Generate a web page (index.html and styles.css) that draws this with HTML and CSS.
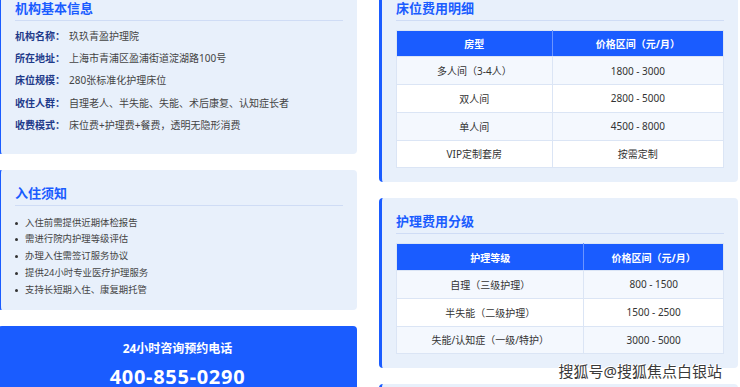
FILE: index.html
```html
<!DOCTYPE html>
<html lang="zh-CN">
<head>
<meta charset="utf-8">
<title>玖玖青盈护理院</title>
<link rel="stylesheet" href="styles.css">
</head>
<body>
<div class="page">
  <div class="col">
    <section class="card card-info">
      <h3 class="card-title">机构基本信息</h3>
      <div class="info">
        <div class="info-row"><span class="info-label">机构名称：</span><span class="info-value">玖玖青盈护理院</span></div>
        <div class="info-row"><span class="info-label">所在地址：</span><span class="info-value">上海市青浦区盈浦街道淀湖路100号</span></div>
        <div class="info-row"><span class="info-label">床位规模：</span><span class="info-value">280张标准化护理床位</span></div>
        <div class="info-row"><span class="info-label">收住人群：</span><span class="info-value">自理老人、半失能、失能、术后康复、认知症长者</span></div>
        <div class="info-row"><span class="info-label">收费模式：</span><span class="info-value">床位费+护理费+餐费，透明无隐形消费</span></div>
      </div>
    </section>
    <section class="card card-notice">
      <h3 class="card-title">入住须知</h3>
      <ul class="notice">
        <li>入住前需提供近期体检报告</li>
        <li>需进行院内护理等级评估</li>
        <li>办理入住需签订服务协议</li>
        <li>提供24小时专业医疗护理服务</li>
        <li>支持长短期入住、康复期托管</li>
      </ul>
    </section>
    <section class="phone-card">
      <div class="phone-title">24小时咨询预约电话</div>
      <div class="phone-num">400-855-0290</div>
    </section>
  </div>
  <div class="col">
    <section class="card">
      <h3 class="card-title">床位费用明细</h3>
      <table class="fee-table">
        <thead><tr><th class="c-bed">房型</th><th>价格区间（元/月）</th></tr></thead>
        <tbody>
          <tr><td>多人间（3-4人）</td><td>1800 - 3000</td></tr>
          <tr><td>双人间</td><td>2800 - 5000</td></tr>
          <tr><td>单人间</td><td>4500 - 8000</td></tr>
          <tr><td>VIP定制套房</td><td>按需定制</td></tr>
        </tbody>
      </table>
    </section>
    <section class="card">
      <h3 class="card-title">护理费用分级</h3>
      <table class="fee-table">
        <thead><tr><th class="c-care">护理等级</th><th>价格区间（元/月）</th></tr></thead>
        <tbody>
          <tr><td>自理（三级护理）</td><td>800 - 1500</td></tr>
          <tr><td>半失能（二级护理）</td><td>1500 - 2500</td></tr>
          <tr><td>失能/认知症（一级/特护）</td><td>3000 - 5000</td></tr>
        </tbody>
      </table>
    </section>
    <section class="card card-more"></section>
  </div>
</div>
<div class="watermark">搜狐号@搜狐焦点白银站</div>
</body>
</html>
```
FILE: styles.css
```css
* { box-sizing: border-box; margin: 0; padding: 0; }
html, body { background: #fff; overflow: hidden; }
body {
  font-family: "Noto Sans", "Noto Sans CJK SC", sans-serif;
  color: #444;
  position: relative;
  height: 387px;
}
.page {
  display: grid;
  grid-template-columns: 359px 359px;
  column-gap: 22px;
  align-items: start;
  margin: -15.5px 0 0 -2px;
}
.col { display: flex; flex-direction: column; gap: 16px; }
.card {
  background: #e8f0fb;
  border-left: 3px solid #1a5cff;
  border-radius: 4px;
  padding: 15px 14px 14px 14px;
}
.card-more { height: 60px; }
.card-title {
  font-size: 13px;
  line-height: 16px;
  font-weight: 700;
  color: #1a5cff;
  padding-bottom: 4px;
  border-bottom: 1px solid #cfdcf5;
}
.card-info { padding-bottom: 17px; }
.info { margin-top: 4px; }
.info-row { display: flex; font-size: 10px; line-height: 22.4px; }
.info-label { width: 54px; flex: none; font-weight: 700; color: #1e3a8a; }
.info-value { color: #444; }

.card-notice { padding-bottom: 12px; }
.notice { list-style: none; margin-top: 9px; }
.notice li {
  position: relative;
  padding-left: 10px;
  font-size: 9.4px;
  line-height: 16.75px;
  color: #444;
}
.notice li::before {
  content: "";
  position: absolute;
  left: 0;
  top: 7px;
  width: 3px;
  height: 3px;
  border-radius: 50%;
  background: #333;
}

.phone-card {
  background: #1a5cff;
  border-radius: 4px;
  padding: 15px 14px 20px;
  text-align: center;
  color: #fff;
}
.phone-title { font-size: 12px; line-height: 15px; font-weight: 700; margin-bottom: 10.5px; }
.phone-num { font-size: 20px; line-height: 20px; font-weight: 700; letter-spacing: 0.7px; }

.fee-table {
  width: 100%;
  margin-top: 9px;
  border-collapse: collapse;
  font-size: 10px;
  text-align: center;
  color: #333;
}
.fee-table th {
  height: 26.75px;
  background: #1a5cff;
  color: #fff;
  font-weight: 700;
  border: 1px solid #dbe5f5;
  border-right-color: #6b95ff;
}
.fee-table th:last-child { border-right-color: #dbe5f5; }
.fee-table td {
  height: 27.75px;
  border: 1px solid #dbe5f5;
}
.fee-table tbody tr:nth-child(odd) td { background: #f4f8fe; }
.fee-table tbody tr:nth-child(even) td { background: #fff; }
.c-bed { width: 47.6%; }
.c-care { width: 57.3%; }

.watermark {
  position: absolute;
  right: 18px;
  top: 361px;
  font-size: 15px;
  line-height: 20px;
  color: #3a3a3a;
  text-shadow: 0 0 2px #fff, 1px 1px 0 #fff, -1px -1px 0 #fff;
}
```
